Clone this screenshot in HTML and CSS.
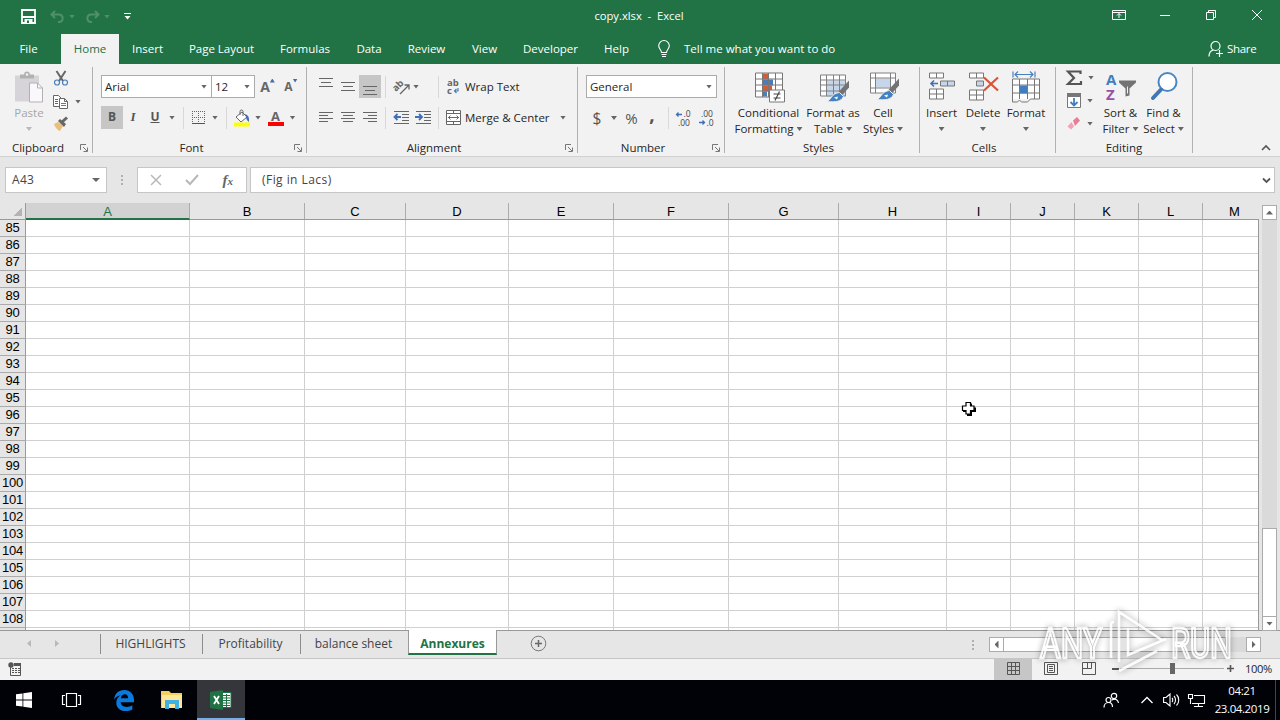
FILE: index.html
```html
<!DOCTYPE html>
<html lang="en">
<head>
    <meta charset="UTF-8">
    <title>copy.xlsx - Excel</title>
    <link rel="stylesheet" href="styles.css">
</head>
<body>
    <header class="titlebar">
        <div class="quick-access">
            <svg class="save" width="15" height="15" viewBox="0 0 15 15"><path d="M1 1h13v13H1z" fill="none" stroke="#fff" stroke-width="1.800"/><path d="M1 7h13v2H1zM3.500 10h8v5h-8z" fill="#fff"/><path d="M6 11.500h2V14H6z" fill="#217346"/></svg>
            <svg class="undo" width="15" height="14" viewBox="0 0 15 14"><path d="M5 1L1.500 4.500 5 8M2 4.500h7.500a3.800 3.800 0 0 1 0 7.500H8" fill="none" stroke="#4f9069" stroke-width="2"/></svg>
            <i class="arrow faded"></i>
            <svg class="redo" width="15" height="14" viewBox="0 0 15 14"><path d="M10 1l3.500 3.500L10 8M13 4.500H5.500a3.800 3.800 0 0 0 0 7.500H7" fill="none" stroke="#4f9069" stroke-width="2"/></svg>
            <i class="arrow faded"></i>
            <svg class="customize" width="7" height="7" viewBox="0 0 7 7"><path d="M0 .5h7" stroke="#fff"/><path d="M.5 3h6l-3 3.500z" fill="#fff"/></svg>
        </div>
        <div class="doc-name">copy.xlsx&nbsp; - &nbsp;Excel</div>
        <div class="window-buttons">
            <svg width="14" height="12" viewBox="0 0 14 12"><path d="M.5 1.500h13v9H.5zM.5 3.500h13M7 9V4.500M5 6.500l2-2 2 2" fill="none" stroke="#fff"/></svg>
            <svg width="12" height="12" viewBox="0 0 12 12"><path d="M1 6.500h10" stroke="#fff"/></svg>
            <svg width="12" height="12" viewBox="0 0 12 12"><path d="M1.500 3.500h7v7h-7zM3.500 3.500v-2h7v7h-2" fill="none" stroke="#fff"/></svg>
            <svg width="12" height="12" viewBox="0 0 12 12"><path d="M1 1l10 10M11 1L1 11" stroke="#fff"/></svg>
        </div>
    </header>

    <nav class="menu">
        <span class="file">File</span>
        <span class="active">Home</span>
        <span>Insert</span>
        <span>Page Layout</span>
        <span>Formulas</span>
        <span>Data</span>
        <span>Review</span>
        <span>View</span>
        <span>Developer</span>
        <span>Help</span>
        <svg width="14" height="18" viewBox="0 0 14 18"><path d="M4.500 12.500c0-2.500-2.800-3.600-2.800-6.700a5 5 0 0 1 10.600 0c0 3.100-2.800 4.200-2.800 6.700zM4.500 14.500h5M5 16.500h4" fill="none" stroke="#fff" stroke-width="1.100"/></svg>
        <span class="tell-me">Tell me what you want to do</span>
        <div class="share">
            <svg width="16" height="18" viewBox="0 0 16 18"><circle cx="7.500" cy="6" r="4.500" fill="none" stroke="#fff" stroke-width="1.200"/><path d="M1 16.500c0-4 2-6 4.500-6.500M8 13.500h7M11.500 10v7" fill="none" stroke="#fff" stroke-width="1.200"/></svg>
            <span>Share</span>
        </div>
    </nav>

    <section class="ribbon">
        <div class="group clipboard">
            <div class="group-body">
                <div class="big-button disabled">
                    <svg width="30" height="34" viewBox="0 0 30 34"><path d="M1 5h24v26H1z" fill="#d6d4d8"/><path d="M6 4h4c0-4 6-4 6 0h4v4H6z" fill="#b1b1b1"/><circle cx="13" cy="4" r="1.300" fill="#f2f2f2"/><path d="M15.500 12.500h8l5 5v14h-13z" fill="#fbf8fb" stroke="#b3afb5"/><path d="M23.500 12.500v5h5" fill="none" stroke="#b3afb5"/></svg>
                    <span>Paste</span>
                    <i class="arrow"></i>
                </div>
                <div class="small-buttons">
                    <div>
                        <svg width="16" height="16" viewBox="0 0 16 16"><path d="M3.500 0l6.500 10M12.500 0L6 10" stroke="#666" stroke-width="2"/><circle cx="4" cy="11.500" r="2.500" fill="none" stroke="#4a7ebb" stroke-width="1.200"/><circle cx="12" cy="11.500" r="2.500" fill="none" stroke="#4a7ebb" stroke-width="1.200"/></svg>
                    </div>
                    <div>
                        <svg width="16" height="16" viewBox="0 0 16 16"><path d="M.5 1.500h5l3 3v8h-8z" fill="#fff" stroke="#666"/><path d="M6.500 4.500h5l3 3v7h-8z" fill="#fff" stroke="#666"/><path d="M11.500 4.500v3h3M2 5.500h3M2 7.500h3M2 9.500h3" fill="none" stroke="#666"/><path d="M8 9.500h5M8 11.500h5" stroke="#4a7ebb"/></svg>
                        <i class="arrow"></i>
                    </div>
                    <div>
                        <svg width="16" height="16" viewBox="0 0 16 16"><path d="M1 7l4-2 5 4-3 5C4 13 2 10 1 7z" fill="#eabf7c"/><path d="M5 4l2-2 6 5-2 3z" fill="#666"/><path d="M9 5l5-4.500" stroke="#666" stroke-width="3"/></svg>
                    </div>
                </div>
            </div>
            <div class="group-label"><span>Clipboard</span><svg class="launcher" width="8" height="8" viewBox="0 0 8 8"><path d="M.5 6V.5H6M3 3l4 4M7.500 3.500v4h-4" fill="none" stroke="#777"/></svg></div>
        </div>

        <div class="group font">
            <div class="group-body">
                <div class="tool-row font-top">
                    <div class="combo">Arial<i class="arrow"></i></div>
                    <div class="combo font-size">12<i class="arrow"></i></div>
                    <b class="grow">A<i class="arrow up"></i></b>
                    <b class="shrink">A<i class="arrow"></i></b>
                </div>
                <div class="tool-row font-bottom">
                    <b class="letter pressed">B</b>
                    <b class="letter italic">I</b>
                    <b class="letter underline">U</b>
                    <i class="arrow"></i>
                    <i class="divider"></i>
                    <svg width="14" height="14" viewBox="0 0 14 14"><path d="M.5 0v13M6.500 0v13M12.500 0v13M0 .5h13M0 6.500h13" stroke="#666" stroke-dasharray="1 1"/><path d="M0 12.500h13" stroke="#555"/></svg>
                    <i class="arrow"></i>
                    <i class="divider"></i>
                    <svg width="18" height="18" viewBox="0 0 18 18"><path d="M3 8l6-5 5 5-6 5z" fill="#fff" stroke="#666"/><path d="M7 6V2.500a1.500 1.500 0 0 1 3 0V7" fill="none" stroke="#666"/><path d="M12 5c3 1 4.500 3 4 8-1.500-1-3-3-3-5z" fill="#3f6fb5"/><path d="M1 13.500h16v4H1z" fill="#ffff00"/></svg>
                    <i class="arrow"></i>
                    <b class="font-color">A</b>
                    <i class="arrow"></i>
                </div>
            </div>
            <div class="group-label"><span>Font</span><svg class="launcher" width="8" height="8" viewBox="0 0 8 8"><path d="M.5 6V.5H6M3 3l4 4M7.500 3.500v4h-4" fill="none" stroke="#777"/></svg></div>
        </div>

        <div class="group alignment">
            <div class="group-body">
                <div class="tool-row align-top">
                    <svg width="22" height="23" viewBox="0 0 22 23"><path d="M4 3.500h14M6 7.500h10M4 11.500h14" stroke="#666"/></svg>
                    <svg width="22" height="23" viewBox="0 0 22 23"><path d="M4 7.500h14M6 11.500h10M4 15.500h14" stroke="#666"/></svg>
                    <svg class="pressed" width="22" height="23" viewBox="0 0 22 23"><path d="M4 11.500h14M6 15.500h10M4 19.500h14" stroke="#666"/></svg>
                    <i class="divider"></i>
                    <svg width="18" height="18" viewBox="0 0 18 18"><text x="4" y="14" transform="rotate(-45 4 14)" class="icon-text">ab</text><path d="M8 16l8.500-8.500M12.500 7H17v4.500" fill="none" stroke="#666" stroke-width="1.300"/></svg>
                    <i class="arrow"></i>
                    <i class="divider right"></i>
                    <svg class="right" width="15" height="19" viewBox="0 0 15 19"><text x="1" y="9" class="icon-text">ab</text><text x="1" y="17" class="icon-text">c</text><path d="M12 11v3H8.500M10.500 12l-2 2 2 2" fill="none" stroke="#4a7ebb" stroke-width="1.200"/></svg>
                    <span class="caption">Wrap Text</span>
                </div>
                <div class="tool-row align-bottom">
                    <svg width="22" height="23" viewBox="0 0 22 23"><path d="M4 6.500h14M4 9.500h9M4 12.500h14M4 15.500h9" stroke="#666"/></svg>
                    <svg width="22" height="23" viewBox="0 0 22 23"><path d="M4 6.500h14M6 9.500h10M4 12.500h14M6 15.500h10" stroke="#666"/></svg>
                    <svg width="22" height="23" viewBox="0 0 22 23"><path d="M4 6.500h14M9 9.500h9M4 12.500h14M9 15.500h9" stroke="#666"/></svg>
                    <i class="divider"></i>
                    <svg class="indent" width="17" height="14" viewBox="0 0 17 14"><path d="M1 1.500h15M9 4.500h7M9 7.500h7M9 10.500h7M1 13.500h15" stroke="#666"/><path d="M8 7H2M4.500 4L1.500 7l3 3" fill="none" stroke="#3f6fb5" stroke-width="1.800"/></svg>
                    <svg class="indent" width="17" height="14" viewBox="0 0 17 14"><path d="M1 1.500h15M9 4.500h7M9 7.500h7M9 10.500h7M1 13.500h15" stroke="#666"/><path d="M0 7h6M4 4l3 3-3 3" fill="none" stroke="#3f6fb5" stroke-width="1.800"/></svg>
                    <i class="divider right"></i>
                    <svg class="right" width="15" height="15" viewBox="0 0 15 15"><path d="M.5.5h14v14H.5zM.5 3.500h14M.5 11.500h14M7.500.5v3M7.500 11.500v3" fill="#fff" stroke="#666"/><path d="M2 7.500h11M4.500 5.500l-2 2 2 2M10.500 5.500l2 2-2 2" fill="none" stroke="#3f6fb5"/></svg>
                    <span class="caption">Merge &amp; Center</span>
                    <i class="arrow"></i>
                </div>
            </div>
            <div class="group-label"><span>Alignment</span><svg class="launcher" width="8" height="8" viewBox="0 0 8 8"><path d="M.5 6V.5H6M3 3l4 4M7.500 3.500v4h-4" fill="none" stroke="#777"/></svg></div>
        </div>

        <div class="group number">
            <div class="group-body">
                <div class="tool-row number-top">
                    <div class="combo">General<i class="arrow"></i></div>
                </div>
                <div class="tool-row number-bottom">
                    <span class="sign">$</span>
                    <i class="arrow"></i>
                    <span class="sign percent-sign">%</span>
                    <b class="sign comma">,</b>
                    <i class="divider"></i>
                    <svg width="16" height="17" viewBox="0 0 16 17"><text x="8.500" y="7" class="digits">.0</text><text x="3" y="15.500" class="digits">.00</text><path d="M7 4.500H1.500M3.500 2.500l-2 2 2 2" fill="none" stroke="#3f6fb5" stroke-width="1.300"/></svg>
                    <svg width="16" height="17" viewBox="0 0 16 17"><text x="3" y="7" class="digits">.00</text><text x="8.500" y="15.500" class="digits">.0</text><path d="M1 12.500h5.500M4.500 10.500l2 2-2 2" fill="none" stroke="#3f6fb5" stroke-width="1.300"/></svg>
                </div>
            </div>
            <div class="group-label"><span>Number</span><svg class="launcher" width="8" height="8" viewBox="0 0 8 8"><path d="M.5 6V.5H6M3 3l4 4M7.500 3.500v4h-4" fill="none" stroke="#777"/></svg></div>
        </div>

        <div class="group styles">
            <div class="group-body">
                <div class="big-button">
                    <svg width="32" height="32" viewBox="0 0 32 32"><path d="M2.500 1.500h27v24h-27z" fill="#fff"/><path d="M10 2h6v6h-6zM10 14h9v6h-9z" fill="#d75a37"/><path d="M10 8h10v6H10zM10 20h4v5h-4z" fill="#4a7ebb"/><path d="M2.500 1.500h27v24h-27zM2.500 7.500h27M2.500 13.500h27M2.500 19.500h27M9.500 1.500v24M15.500 1.500v24M22.500 1.500v24" fill="none" stroke="#777"/><path d="M16.500 18.500h15v12h-15z" fill="#fff" stroke="#777"/><path d="M20.500 22.500h7M20.500 26.500h7M26.500 20l-4.500 9" stroke="#444" stroke-width="1.200"/></svg>
                    <span>Conditional</span>
                    <span>Formatting<i class="arrow"></i></span>
                </div>
                <div class="big-button">
                    <svg width="32" height="32" viewBox="0 0 32 32"><path d="M3.500 3.500h25v21h-25z" fill="#fff"/><path d="M9 9h20v16H9z" fill="#c5d6ea"/><path d="M3.500 3.500h25v21h-25zM3.500 8.500h25M3.500 13.500h25M3.500 19.500h25M9.500 3.500v21M16.500 3.500v21M22.500 3.500v21" fill="none" stroke="#808080"/><path d="M32 9v7l-8 9-4-3z" fill="#737373"/><path d="M22.500 21l4 4c-2 5-8 6-17 5 5-1 4-8 13-9z" fill="#4381bf" stroke="#f2f2f2"/><path d="M17 26l4-1-1 3z" fill="#fff"/></svg>
                    <span>Format as</span>
                    <span>Table<i class="arrow"></i></span>
                </div>
                <div class="big-button">
                    <svg width="32" height="32" viewBox="0 0 32 32"><path d="M3.500 1.500h25v20h-25z" fill="#fff"/><path d="M9 7h14v9H9z" fill="#c5d6ea"/><path d="M3.500 1.500h25v20h-25zM3.500 6.500h25M3.500 16.500h25M8.500 1.500v20M23.500 1.500v20" fill="none" stroke="#808080"/><path d="M32 7v7l-8 9-4-3z" fill="#737373"/><path d="M22.500 19l4 4c-2 5-8 6-17 5 5-1 4-8 13-9z" fill="#4381bf" stroke="#f2f2f2"/><path d="M17 24l4-1-1 3z" fill="#fff"/></svg>
                    <span>Cell</span>
                    <span>Styles<i class="arrow"></i></span>
                </div>
            </div>
            <div class="group-label"><span>Styles</span></div>
        </div>

        <div class="group cells">
            <div class="group-body">
                <div class="big-button">
                    <svg width="30" height="32" viewBox="0 0 30 32"><path d="M2.500 1.500h14v5h-14zM9.500 1.500v5M2.500 17.500h14v10h-14zM2.500 22.500h14M9.500 17.500v10" fill="#fff" stroke="#777"/><path d="M13.500 9.500h14v5h-14zM20.500 9.500v5" fill="#c5d6ea" stroke="#777"/><path d="M11 12H4M7 9l-3 3 3 3" fill="none" stroke="#3f6fb5" stroke-width="1.600"/></svg>
                    <span>Insert</span>
                    <i class="arrow"></i>
                </div>
                <div class="big-button">
                    <svg width="30" height="32" viewBox="0 0 30 32"><path d="M1.500 1.500h14v5h-14zM8.500 1.500v5M1.500 18.500h14v10h-14zM1.500 23.500h14M8.500 18.500v10" fill="#fff" stroke="#777"/><path d="M8.500 9.500h7v5h-7z" fill="#c5d6ea" stroke="#777"/><path d="M16 6l14 13M30 6L16 19" stroke="#d9533b" stroke-width="2.200"/></svg>
                    <span>Delete</span>
                    <i class="arrow"></i>
                </div>
                <div class="big-button">
                    <svg width="30" height="32" viewBox="0 0 30 32"><path d="M2 0v6M24 0v6M4 3h18M7 0L4 3l3 3M19 0l3 3-3 3" fill="none" stroke="#4a7ebb" stroke-width="1.200"/><path d="M1.500 7.500h27v20h-27z" fill="#fff"/><path d="M1.500 27.500v-20h27v20h-9l-3 3h-6l-2-2-2 2h-5zM1.500 13.500h27M1.500 21.500h27M8.500 7.500v20M16.500 7.500v20M23.500 7.500v20" fill="none" stroke="#777"/><path d="M9 14h7v8H9z" fill="#3f7fbf"/></svg>
                    <span>Format</span>
                    <i class="arrow"></i>
                </div>
            </div>
            <div class="group-label"><span>Cells</span></div>
        </div>

        <div class="group editing">
            <div class="group-body">
                <div class="small-buttons">
                    <div>
                        <svg width="17" height="16" viewBox="0 0 17 16"><path d="M14.500 4V1.500H2L8 8l-6 6h13v-3" fill="none" stroke="#555" stroke-width="2.200"/></svg>
                        <i class="arrow"></i>
                    </div>
                    <div>
                        <svg width="16" height="16" viewBox="0 0 16 16"><path d="M1.500 1.500h13v13h-13z" fill="#fff" stroke="#777"/><path d="M1 0h14v4H1z" fill="#777"/><path d="M8 5v7M4.500 9L8 12.500 11.500 9" fill="none" stroke="#3f7fbf" stroke-width="1.800"/></svg>
                        <i class="arrow"></i>
                    </div>
                    <div>
                        <svg width="16" height="14" viewBox="0 0 16 14"><path d="M7 3.500L11 0l3 3.500L9 9z" fill="#ea7c96"/><path d="M5.500 5L8 9.500 5 12.500l-3.500-3z" fill="#f0a3b5"/></svg>
                        <i class="arrow"></i>
                    </div>
                </div>
                <div class="big-button">
                    <svg width="32" height="32" viewBox="0 0 32 32"><text x="1" y="13" class="sort-a">A</text><text x="1" y="28" class="sort-z">Z</text><path d="M14 9h17v2l-6.500 6v7l-4 1v-8L14 11z" fill="#737373"/><path d="M22.500 15v7" stroke="#f2f2f2"/></svg>
                    <span>Sort &amp;</span>
                    <span>Filter<i class="arrow"></i></span>
                </div>
                <div class="big-button">
                    <svg width="32" height="32" viewBox="0 0 32 32"><circle cx="19.500" cy="10.500" r="9" fill="#fff" stroke="#4a86c5" stroke-width="2"/><path d="M13 18L5 26.500" stroke="#3f76b3" stroke-width="4" stroke-linecap="round"/></svg>
                    <span>Find &amp;</span>
                    <span>Select<i class="arrow"></i></span>
                </div>
            </div>
            <div class="group-label"><span>Editing</span></div>
        </div>
        <svg class="collapse" width="10" height="6" viewBox="0 0 10 6"><path d="M1 5l4-4 4 4" fill="none" stroke="#555" stroke-width="1.600"/></svg>
    </section>

    <section class="formula-bar">
        <div class="name-box">A43<i class="arrow"></i></div>
        <div class="dots"><i></i><i></i><i></i></div>
        <div class="formula-buttons">
            <svg width="12" height="12" viewBox="0 0 12 12"><path d="M1 1l10 10M11 1L1 11" stroke="#b8b8b8" stroke-width="1.500"/></svg>
            <svg width="14" height="12" viewBox="0 0 14 12"><path d="M1 6l4 4 8-9" fill="none" stroke="#b8b8b8" stroke-width="2"/></svg>
            <span class="fx">f<small>x</small></span>
        </div>
        <div class="formula-input">
            <span>(Fig in Lacs)</span>
            <svg width="9" height="7" viewBox="0 0 9 7"><path d="M1 1.500l3.500 3.500L8 1.500" fill="none" stroke="#555" stroke-width="1.800"/></svg>
        </div>
    </section>

    <main class="sheet">
        <div class="grid">
            <div class="column-heads" id="column-heads"><span class="corner"></span></div>
            <div class="rows" id="rows"></div>
        </div>
        <div class="v-scroll">
            <div class="scroll-button"><i class="arrow up"></i></div>
            <div class="v-thumb"></div>
            <div class="scroll-button"><i class="arrow"></i></div>
        </div>
        <svg class="cursor" width="15" height="15" viewBox="0 0 15 15"><path d="M6 2.500h5v4h4v4.500h-4v4H6v-4H2V6.500h4z" fill="#000"/><path d="M5 1.500h4.500V5H13v4.500H9.500V13H5V9.500H1.500V5H5z" fill="#fff" stroke="#000" stroke-width="1.200"/></svg>
    </main>

    <section class="sheet-tabs">
        <div class="tab-arrows"><i></i><i class="next"></i></div>
        <span class="tab highlights">HIGHLIGHTS</span>
        <span class="tab profitability">Profitability</span>
        <span class="tab balance">balance sheet</span>
        <span class="tab current">Annexures</span>
        <svg class="add-sheet" width="17" height="17" viewBox="0 0 17 17"><circle cx="8.500" cy="8.500" r="7.300" fill="none" stroke="#777"/><path d="M8.500 5v7M5 8.500h7" stroke="#666" stroke-width="1.500"/></svg>
        <div class="dots"><i></i><i></i><i></i></div>
        <div class="h-scroll">
            <div class="scroll-button"><i class="side"></i></div>
            <div class="h-thumb"></div>
            <div class="scroll-button"><i class="side next"></i></div>
        </div>
    </section>

    <footer class="status-bar">
        <svg class="macro" width="14" height="14" viewBox="0 0 14 14"><path d="M2.500 5v8.500h10V2.500" fill="none" stroke="#555"/><path d="M6 1h7v3H6z" fill="#555"/><circle cx="3" cy="3" r="2.700" fill="#555"/><path d="M4 6.500h8M4 8.500h8M4 10.500h8" stroke="#555" stroke-dasharray="2 1"/></svg>
        <div class="view selected"><svg width="13" height="13" viewBox="0 0 13 13"><path d="M.5.500h12v12H.5zM.5 4.500h12M.5 8.500h12M4.500.5v12M8.500.5v12" fill="none" stroke="#555"/></svg></div>
        <div class="view"><svg width="14" height="13" viewBox="0 0 14 13"><path d="M.5.500h13v12H.5zM3.500 2.500h7v8h-7zM5 4.500h4M5 6.500h4M5 8.500h4" fill="none" stroke="#555"/></svg></div>
        <div class="view"><svg width="14" height="13" viewBox="0 0 14 13"><path d="M.5.500h13v12H.5zM5.500.5v6M9.500.5v6h-9" fill="none" stroke="#555"/></svg></div>
        <i class="minus"></i>
        <div class="zoom-track"><i></i></div>
        <svg width="7" height="7" viewBox="0 0 7 7"><path d="M3.500 0v7M0 3.500h7" stroke="#555" stroke-width="1.600"/></svg>
        <span class="percent">100%</span>
    </footer>

    <div class="taskbar">
        <div class="task"><svg width="16" height="16" viewBox="0 0 16 16"><path d="M0 2.300l6.500-.9v6.200H0zM7.300 1.300L16 0v7.600H7.300zM0 8.400h6.500v6.200L0 13.700zM7.300 8.400H16V16l-8.700-1.300z" fill="#fff"/></svg></div>
        <div class="task"><svg width="20" height="16" viewBox="0 0 20 16"><path d="M4.500 1.500h10v13h-10zM3 3.500H.5v9H3M16 3.500h2.500v9H16" fill="none" stroke="#fff" stroke-width="1.200"/></svg></div>
        <div class="task edge"><svg width="20" height="21" viewBox="0 0 20 21"><path d="M0 9.500C.8 3.500 4.500 0 10.200 0 16.500 0 20 4.500 20 10v2.300H6.700c.2 3.200 2.700 4.600 5.800 4.600 2.200 0 4-.5 5.800-1.600v4.200C16.500 20.500 14 21 11.500 21 6 21 2.300 17.700 2.300 12.700c0-3.500 1.800-6 4.600-7.400C4.200 5.500 1.700 7 0 9.500zM6.900 8.300h7.200c0-2.600-1.200-4-3.500-4S7.200 6 6.900 8.300z" fill="#0a7bdc"/></svg></div>
        <div class="task explorer"><svg width="22" height="20" viewBox="0 0 22 20"><path d="M0 1h8l2 2h11v15H0z" fill="#f5cf5d"/><path d="M1 5h20v13H1z" fill="#fde69a"/><path d="M4 10h14v9h-4v-5H8v5H4z" fill="#41b0e3"/></svg></div>
        <div class="task running"><svg width="22" height="20" viewBox="0 0 22 20"><path d="M11 2.500h10v15H11z" fill="#fff" stroke="#1f7244"/><path d="M13 5.500h7M13 8h7M13 10.500h7M13 13h7M13 15.500h7M16.500 4v13" stroke="#1f7244"/><path d="M0 2l13-2v20L0 18z" fill="#1f7244"/><path d="M4 6l5 8M9 6l-5 8" stroke="#fff" stroke-width="1.800"/></svg></div>
        <div class="tray">
            <svg width="16" height="16" viewBox="0 0 16 16"><circle cx="11" cy="4" r="2.700" fill="none" stroke="#fff" stroke-width="1.200"/><circle cx="5.500" cy="8" r="2.500" fill="none" stroke="#fff" stroke-width="1.200"/><path d="M1 15.500c0-3 2-5 4.500-5s4 2 4 4.500M9 8c3-2 6-.5 6.500 3" fill="none" stroke="#fff" stroke-width="1.200"/></svg>
            <svg width="12" height="8" viewBox="0 0 12 8"><path d="M.5 7L6 1.500 11.500 7" fill="none" stroke="#fff" stroke-width="1.300"/></svg>
            <svg width="17" height="14" viewBox="0 0 17 14"><path d="M.6 4.500H3L7 1v12L3 9.500H.6zM9 5c1 1 1 3 0 4M11 3c2 2 2 6 0 8M13.500 1.500c3 3 3 8 0 11" fill="none" stroke="#fff" stroke-width="1.100"/></svg>
            <svg width="17" height="15" viewBox="0 0 17 15"><path d="M6 2.500h10.500v8H4M.5 1.500h4v4h-4zM2.500 5.500v5.500M10.500 10.500v3M6 13.500h9" fill="none" stroke="#fff" stroke-width="1.100"/></svg>
        </div>
        <div class="clock"><span>04:21</span><span>23.04.2019</span></div>
    </div>

    <svg class="watermark" width="200" height="74" viewBox="0 0 200 74">
        <text x="4" y="52" textLength="62" lengthAdjust="spacingAndGlyphs">ANY</text>
        <text x="135" y="52" textLength="61" lengthAdjust="spacingAndGlyphs">RUN</text>
        <path d="M75 52V18q0-2 3-2M83 56V6l43 28M92 22v27l38-16M83 65l38-20"/>
    </svg>

    <script>
        const columns = [
            { name: 'A', width: 164 },
            { name: 'B', width: 115 },
            { name: 'C', width: 101 },
            { name: 'D', width: 103 },
            { name: 'E', width: 105 },
            { name: 'F', width: 115 },
            { name: 'G', width: 110 },
            { name: 'H', width: 108 },
            { name: 'I', width: 64 },
            { name: 'J', width: 64 },
            { name: 'K', width: 64 },
            { name: 'L', width: 64 },
            { name: 'M', width: 64 }
        ];

        const heads = document.getElementById('column-heads');
        columns.forEach((column) => {
            heads.innerHTML += `<span class="head${column.name === 'A' ? ' selected' : ''}" style="width: ${column.width}px">${column.name}</span>`;
        });

        // Row 109 is cut off by the sheet tabs
        const rows = document.getElementById('rows');
        for (let number = 85; number <= 109; number++) {
            const cells = columns.map((column) => `<span class="cell" style="width: ${column.width}px"></span>`).join('');
            rows.innerHTML += `<div class="row"><span class="row-number">${number < 109 ? number : ''}</span>${cells}</div>`;
        }
    </script>
</body>
</html>
```

FILE: styles.css
```css
* {
    box-sizing: border-box;
}
body {
    width: 1280px;
    height: 720px;
    margin: 0;
    overflow: hidden;
    position: relative;
    background-color: #e6e6e6;
    color: #262626;
    font-family: "Open Sans", "Noto Sans", sans-serif;
    font-size: 11.5px;
    line-height: 16px;
    white-space: nowrap;
}
svg {
    display: block;
    flex: none;
    overflow: visible;
}
.arrow {
    display: block;
    flex: none;
    width: 6px;
    height: 4px;
    background-color: #666;
    clip-path: polygon(0 0, 100% 0, 50% 100%);
}
.arrow.up {
    clip-path: polygon(50% 0, 100% 100%, 0 100%);
}
.arrow.faded {
    background-color: #4f9069;
}

/* Title bar and menu */
.titlebar {
    display: grid;
    grid-template-columns: 320px 1fr 320px;
    height: 34px;
    background-color: #217346;
    color: #fff;
}
.quick-access {
    display: flex;
    align-items: center;
    padding-left: 21px;
    padding-bottom: 1px;
}
.undo {
    margin-left: 14px;
}
.quick-access .arrow {
    margin-left: 4px;
}
.redo {
    margin-left: 10px;
}
.customize {
    margin-left: 14px;
}
.doc-name {
    padding-top: 8px;
    padding-right: 2px;
    text-align: center;
    font-size: 11.2px;
}
.window-buttons {
    display: grid;
    grid-template-columns: repeat(4, 46px);
    justify-content: end;
    justify-items: center;
    align-items: center;
    padding-bottom: 4px;
}
.menu {
    display: grid;
    grid-template-columns: 61px 58px 57px 91px 76px 52px 63px 53px 79px 53px 41px 1fr 72px;
    align-items: center;
    height: 30px;
    background-color: #217346;
    color: #fff;
    text-align: center;
}
.menu .file {
    padding-right: 4px;
}
.menu .active {
    height: 30px;
    line-height: 30px;
    background-color: #f2f2f2;
    color: #217346;
}
.menu > svg {
    justify-self: center;
}
.menu .tell-me {
    text-align: left;
}
.share {
    display: flex;
    gap: 3px;
    align-items: center;
    letter-spacing: -0.3px;
}

/* Ribbon */
.ribbon {
    display: flex;
    height: 93px;
    background-color: #f2f2f2;
    border-bottom: 1px solid #d2d2d2;
}
.group {
    display: flex;
    flex-direction: column;
    height: 92px;
    border-right: 1px solid #b1b1b1;
    border-image: linear-gradient(transparent 4px, #b1b1b1 4px, #b1b1b1 88px, transparent 88px) 1;
}
.clipboard { width: 93px; }
.font { width: 214px; }
.alignment { width: 271px; }
.number { width: 147px; }
.styles { width: 195px; }
.cells { width: 136px; }
.editing { width: 137px; }
.group-body {
    height: 76px;
}
.clipboard .group-body,
.styles .group-body,
.cells .group-body,
.editing .group-body {
    display: flex;
}
.group-label {
    display: flex;
    height: 16px;
    align-items: center;
}
.group-label span {
    flex: 1;
    text-align: center;
}
.styles .group-label,
.cells .group-label {
    padding-right: 7px;
}
.launcher {
    margin-right: 4px;
    margin-left: 4px;
}
.big-button {
    display: flex;
    flex-direction: column;
    align-items: center;
    padding-top: 6px;
}
.big-button svg {
    height: 35px;
}
.big-button span {
    display: flex;
    align-items: center;
    gap: 3px;
}
.big-button > .arrow {
    margin-top: 6px;
}
.disabled {
    width: 44px;
    padding-left: 14px;
    color: #a6a6a6;
}
.disabled .arrow {
    background-color: #b9b9b9;
}
.small-buttons {
    display: flex;
    flex-direction: column;
    padding-top: 3px;
}
.small-buttons div {
    display: flex;
    align-items: center;
    height: 23px;
    gap: 6px;
}
.clipboard .small-buttons {
    padding-left: 9px;
}
.tool-row {
    display: grid;
    align-items: center;
    justify-items: center;
    height: 23px;
    padding-left: 8px;
}
.tool-row:first-child {
    margin-top: 11px;
    margin-bottom: 8px;
}
.tool-row .right {
    justify-self: end;
}
.font-top { grid-template-columns: 111px 43px 25px 22px; }
.font-bottom { grid-template-columns: 22px 20px 24px 10px 12px 20px 12px 10px 22px 10px 25px 9px; }
.align-top { grid-template-columns: 22px 22px 22px 9px 22px 8px 19px 22px 80px; }
.align-bottom { grid-template-columns: 22px 22px 22px 9px 22px 22px 5px 22px 96px 12px; }
.number-top { grid-template-columns: 131px; }
.number-bottom { grid-template-columns: 22px 12px 20px 24px 8px 22px 23px; }
.combo {
    display: flex;
    align-items: center;
    justify-content: space-between;
    width: 100%;
    height: 23px;
    padding: 0 4px 0 3px;
    border: 1px solid #ababab;
    background-color: #fff;
}
.font-size {
    border-left: none;
}
.divider {
    width: 1px;
    height: 22px;
    background-color: #d8d8d8;
}
.pressed {
    background-color: #c6c6c6;
}
.letter {
    width: 22px;
    height: 23px;
    line-height: 22px;
    text-align: center;
    font-size: 12px;
    color: #555;
}
.italic {
    font-style: italic;
    font-size: 13px;
    font-family: "Liberation Serif", serif;
}
.underline {
    text-decoration: underline;
}
.indent {
    margin-bottom: 2px;
}
.grow,
.shrink {
    display: flex;
    color: #666;
    font-size: 14px;
}
.grow .arrow,
.shrink .arrow {
    width: 5px;
    background-color: #4a6a9c;
}
.shrink {
    font-size: 12px;
}
.font-color {
    width: 16px;
    height: 16px;
    border-bottom: 4px solid #f00;
    text-align: center;
    line-height: 12px;
    font-size: 13px;
    color: #666;
}
.caption {
    justify-self: start;
    padding-left: 4px;
}
.icon-text {
    font: bold 9.5px "Open Sans", sans-serif;
    fill: #666;
}
.digits {
    font: 8.5px "Open Sans", sans-serif;
    fill: #444;
}
.sign {
    font-size: 15.5px;
    color: #555;
}
.percent-sign {
    padding-left: 3px;
    font-size: 15px;
}
.comma {
    padding-bottom: 8px;
    font-size: 19px;
}
.styles .big-button:nth-child(1) { width: 87px; }
.styles .big-button:nth-child(2) { width: 42px; }
.styles .big-button:nth-child(3) { width: 58px; }
.cells .big-button { width: 42px; }
.cells .big-button:nth-child(1) { padding-left: 1px; }
.cells .big-button:nth-child(3) { padding-left: 2px; }
.editing .big-button { width: 43px; }
.editing .small-buttons {
    width: 43px;
    padding-left: 10px;
    padding-top: 2px;
}
.editing .small-buttons div {
    gap: 5px;
}
.sort-a,
.sort-z {
    font: bold 15px "Open Sans", sans-serif;
    fill: #3f7fbf;
}
.sort-z {
    fill: #9a50a5;
}
.collapse {
    margin: 81px 0 0 68px;
}

/* Formula bar */
.formula-bar {
    display: flex;
    height: 46px;
    padding: 10px 5px 10px;
}
.name-box,
.formula-buttons,
.formula-input {
    display: flex;
    align-items: center;
    justify-content: space-between;
    border: 1px solid #c6c6c6;
    background-color: #fff;
    color: #444;
}
.name-box {
    width: 102px;
    padding: 0 6px 0 6px;
    font-size: 12px;
    letter-spacing: 0.3px;
}
.name-box .arrow {
    width: 8px;
    height: 4px;
}
.dots {
    display: flex;
    flex-direction: column;
    gap: 2px;
    align-items: center;
    justify-content: center;
    width: 30px;
}
.dots i {
    width: 2px;
    height: 2px;
    background-color: #b0b0b0;
}
.formula-buttons {
    width: 110px;
    padding: 0 13px 0 12px;
}
.fx {
    font-family: "Liberation Serif", serif;
    font-size: 15px;
    font-weight: bold;
    font-style: italic;
    color: #666;
}
.fx small {
    font-size: 11px;
}
.formula-input {
    flex: 1;
    margin-left: 3px;
    padding: 0 3px 0 11px;
    font-size: 12px;
    letter-spacing: 0.45px;
}

/* Sheet */
.sheet {
    display: flex;
    position: relative;
    height: 427px;
}
.grid {
    width: 1259px;
    height: 427px;
    overflow: hidden;
    font-family: "Liberation Sans", Arial, sans-serif;
    font-size: 13px;
    color: #000;
}
.column-heads {
    display: flex;
    height: 17px;
    border-bottom: 1px solid #999;
}
.column-heads span {
    flex: none;
}
.corner {
    width: 26px;
    border-right: 1px solid #999;
    background: linear-gradient(135deg, transparent 50%, #b4b4b4 50%) 14px 5px / 8px 8px no-repeat;
}
.head {
    height: 16px;
    line-height: 17px;
    text-align: center;
    border-right: 1px solid #ababab;
}
.head.selected {
    height: 17px;
    background-color: #d2d2d2;
    border-bottom: 2px solid #217346;
    color: #217346;
}
.rows {
    height: 410px;
    overflow: hidden;
    border-right: 1px solid #999;
    background-color: #fff;
}
.row {
    display: flex;
    height: 17px;
}
.row-number {
    flex: none;
    width: 26px;
    height: 17px;
    text-align: center;
    line-height: 16px;
    letter-spacing: -0.3px;
    background-color: #e6e6e6;
    border-right: 1px solid #999;
    border-bottom: 1px solid #ababab;
}
.cell {
    flex: none;
    height: 17px;
    border-right: 1px solid #d0d0d0;
    border-bottom: 1px solid #d0d0d0;
}
.v-scroll {
    display: flex;
    flex-direction: column;
    justify-content: space-between;
    width: 15px;
    height: 426px;
    margin: 2px 0 0 3px;
    background-color: #dadada;
}
.scroll-button {
    display: flex;
    flex: none;
    align-items: center;
    justify-content: center;
    width: 15px;
    height: 15px;
    background-color: #fff;
    border: 1px solid #ababab;
}
.scroll-button .arrow {
    width: 7px;
    height: 4px;
}
.v-thumb {
    height: 88px;
    margin-top: auto;
    background-color: #fff;
    border: 1px solid #ababab;
    border-bottom: none;
}
.cursor {
    position: absolute;
    left: 961px;
    top: 198px;
}

/* Sheet tabs */
.sheet-tabs {
    display: flex;
    height: 29px;
    border-top: 1px solid #999;
    border-bottom: 1px solid #c6c6c6;
    font-size: 12px;
    color: #444;
}
.tab-arrows {
    display: flex;
    gap: 24px;
    width: 100px;
    padding: 9px 0 0 27px;
}
.tab-arrows i,
.side {
    width: 4px;
    height: 7px;
    background-color: #b8b8b8;
    clip-path: polygon(100% 0, 100% 100%, 0 50%);
}
.tab-arrows .next,
.side.next {
    clip-path: polygon(0 0, 100% 50%, 0 100%);
}
.tab {
    height: 20px;
    margin-top: 3px;
    padding-right: 2px;
    border-left: 1px solid #8c8c8c;
    text-align: center;
    line-height: 20px;
}
.highlights { width: 102px; }
.profitability { width: 98px; }
.balance { width: 108px; }
.tab.current {
    width: 89px;
    height: 25px;
    margin-top: -1px;
    padding: 4px 0 0;
    border-left: 1px solid #999;
    border-right: 1px solid #999;
    border-bottom: 2px solid #217346;
    background-color: #fff;
    color: #217346;
    font-weight: bold;
}
.add-sheet {
    margin: 4px 0 0 33px;
}
.sheet-tabs .dots {
    margin-left: auto;
}
.h-scroll {
    display: flex;
    justify-content: space-between;
    width: 272px;
    height: 15px;
    margin: 6px 19px 0 1px;
    background-color: #dadada;
}
.side {
    height: 8px;
    background-color: #666;
}
.h-thumb {
    width: 222px;
    margin-right: auto;
    background-color: #fff;
    border: 1px solid #ababab;
    border-left: none;
}

/* Status bar */
.status-bar {
    display: flex;
    align-items: center;
    height: 21px;
    padding-bottom: 2px;
    background-color: #f2f2f2;
}
.macro {
    margin: 0 auto 0 8px;
}
.view {
    display: flex;
    align-items: center;
    justify-content: center;
    width: 38px;
    height: 19px;
}
.view.selected {
    align-self: flex-start;
    height: 21px;
    padding-bottom: 2px;
    background-color: #c6c6c6;
}
.minus {
    width: 7px;
    height: 2px;
    margin-left: 4px;
    background-color: #555;
}
.zoom-track {
    display: flex;
    align-items: center;
    justify-content: center;
    width: 104px;
    height: 11px;
    margin: 0 3px 0 1px;
    background: linear-gradient(#aaa, #aaa) center / 100% 1px no-repeat;
}
.zoom-track i {
    width: 5px;
    height: 11px;
    background-color: #666;
}
.percent {
    width: 46px;
    padding-left: 11px;
    font-size: 11.2px;
    letter-spacing: -0.4px;
}

/* Taskbar */
.taskbar {
    display: flex;
    height: 40px;
    background-color: #000208;
    color: #fff;
}
.task {
    display: flex;
    align-items: center;
    justify-content: center;
    width: 48px;
}
.edge {
    width: 51px;
    padding-left: 4px;
}
.explorer {
    width: 50px;
}
.running {
    background-color: #34363b;
    border-bottom: 2px solid #76aee8;
    padding-top: 2px;
}
.tray {
    display: flex;
    align-items: center;
    gap: 8px;
    margin-left: auto;
    margin-right: 4px;
}
.tray svg:nth-child(1) {
    margin-right: 14px;
}
.tray svg:nth-child(2) {
    margin-right: 2px;
}
.clock {
    display: flex;
    flex-direction: column;
    align-items: center;
    justify-content: center;
    width: 67px;
    margin-right: 4px;
    border-right: 1px solid #444;
    line-height: 18px;
    letter-spacing: -0.4px;
}

.watermark {
    position: absolute;
    left: 1036px;
    top: 606px;
    opacity: 0.8;
    filter: drop-shadow(0 0 3px rgba(0, 0, 0, 0.5));
}
.watermark text {
    font: 43px Roboto, sans-serif;
}
.watermark text,
.watermark path {
    fill: none;
    stroke: #fff;
    stroke-width: 2.6px;
}
```
